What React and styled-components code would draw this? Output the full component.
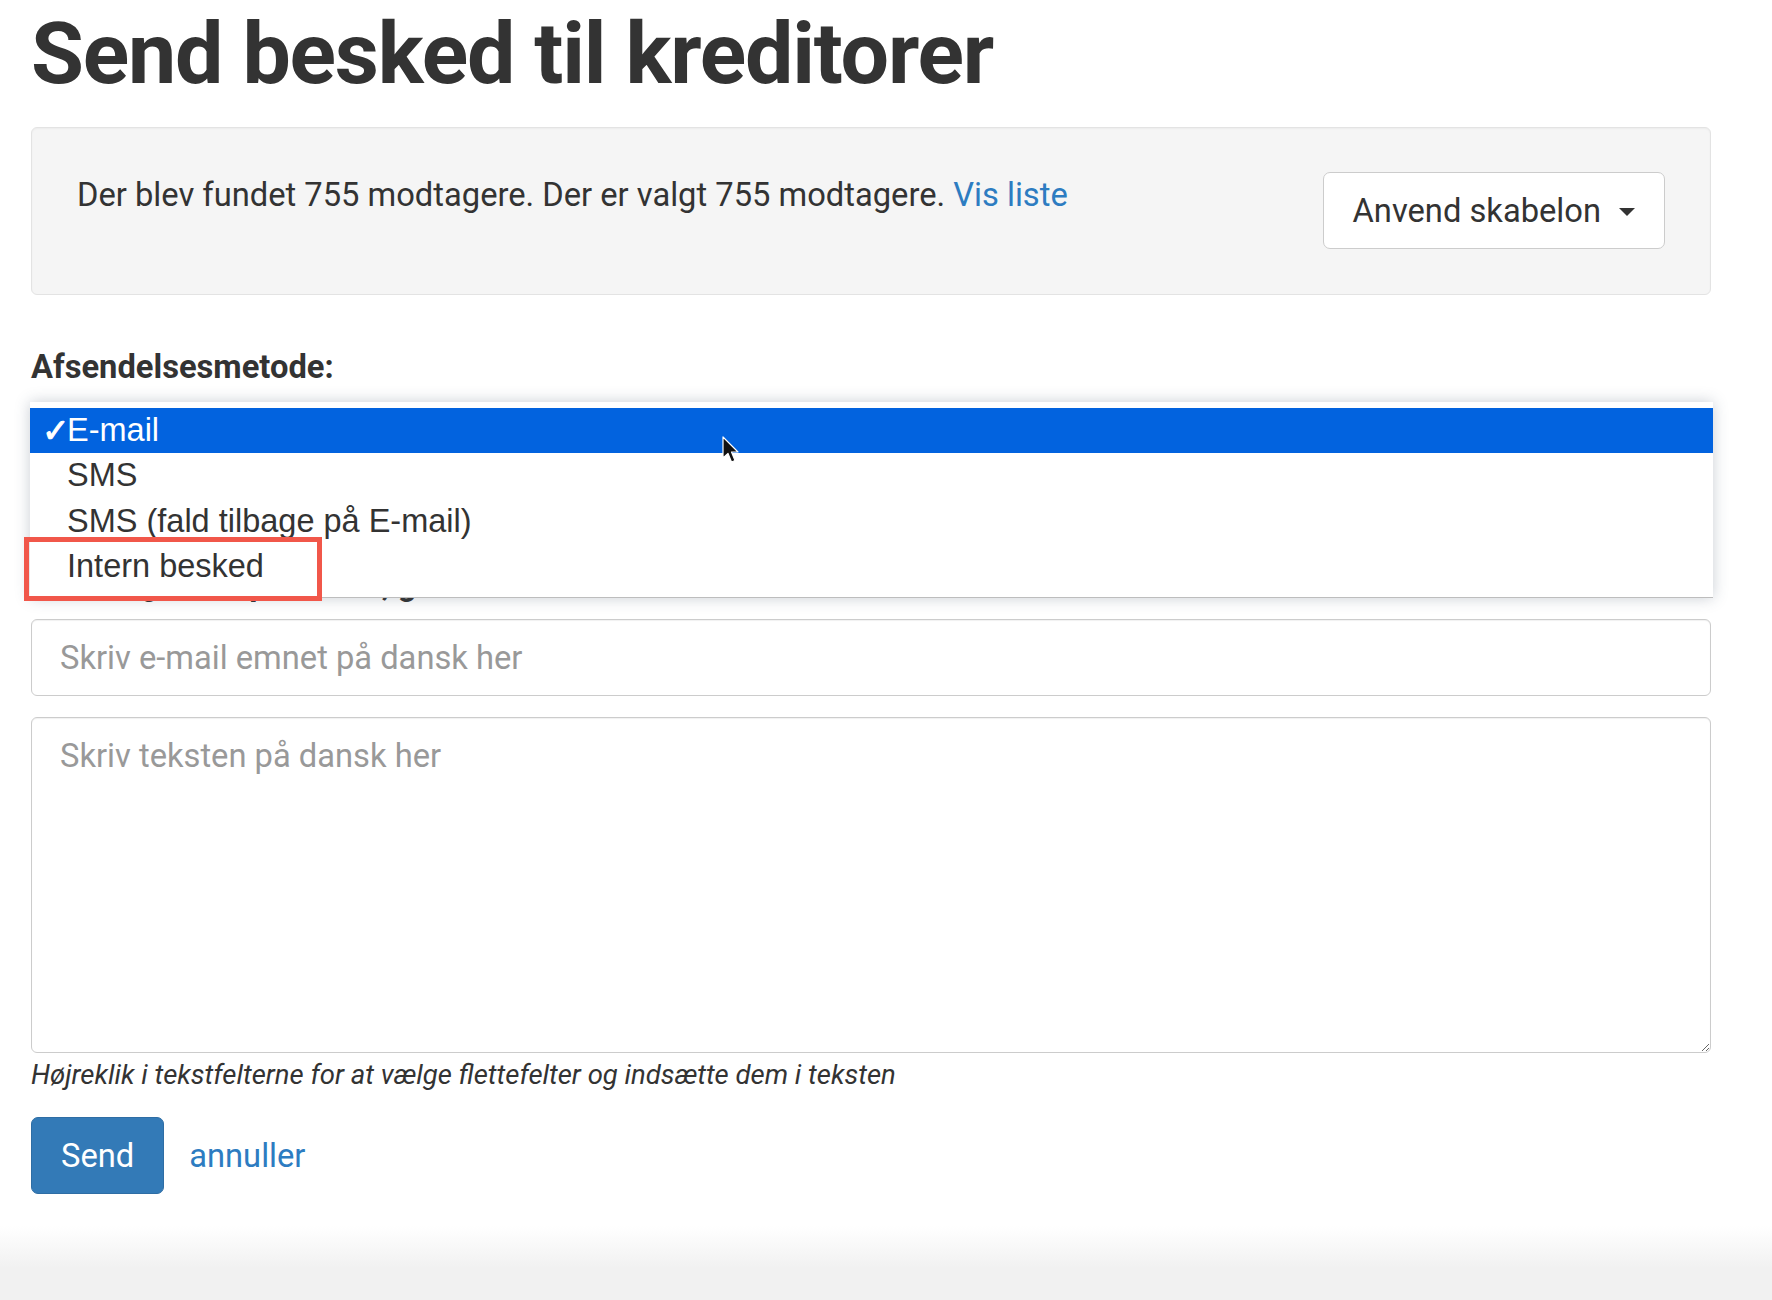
import React from 'react';
import styled, { createGlobalStyle } from 'styled-components';

const GlobalStyle = createGlobalStyle`
    * {
        box-sizing: border-box;
    }

    body {
        margin: 0;
        font-family: Roboto, "Liberation Sans", sans-serif;
        color: #333;
        background: #fff;
    }
`;

const methods = ['E-mail', 'SMS', 'SMS (fald tilbage på E-mail)', 'Intern besked'];

export default function App() {
    return (
        <Page>
            <GlobalStyle />
            <Content>
                <Title>Send besked til kreditorer</Title>

                <Well>
                    <WellText>
                        Der blev fundet 755 modtagere. Der er valgt 755 modtagere.{' '}
                        <TextLink href="#">Vis liste</TextLink>
                    </WellText>
                    <DropdownButton type="button">
                        Anvend skabelon
                        <Caret />
                    </DropdownButton>
                </Well>

                <Form>
                    <Label>Afsendelsesmetode:</Label>
                    <SelectWrap>
                        <SelectBox>E-mail</SelectBox>
                        <OptionList>
                            {methods.map((method, i) => (
                                <Option key={method} $selected={i === 0}>
                                    <CheckSlot>{i === 0 ? '✓' : ''}</CheckSlot>
                                    {method}
                                </Option>
                            ))}
                        </OptionList>
                        <Highlight />
                        <Pointer viewBox="0 0 17 28" width="17" height="28">
                            <path
                                d="M1 1 L1 22 L6 17.5 L9.5 26 L13 24.5 L9.5 16 L16 16 Z"
                                fill="#111"
                                stroke="#fff"
                                strokeWidth="1.2"
                                strokeLinejoin="round"
                            />
                        </Pointer>
                    </SelectWrap>

                    <HiddenLabel>Emne og tekst på dansk, gælder e-mail:</HiddenLabel>
                    <TextInput placeholder="Skriv e-mail emnet på dansk her" />
                    <TextArea placeholder="Skriv teksten på dansk her" />
                    <HelpText>
                        Højreklik i tekstfelterne for at vælge flettefelter og indsætte dem i teksten
                    </HelpText>

                    <Actions>
                        <SendButton type="button">Send</SendButton>
                        <TextLink href="#">annuller</TextLink>
                    </Actions>
                </Form>
            </Content>
        </Page>
    );
}

const Page = styled.div`
    min-height: 1300px;
    background: linear-gradient(to bottom, #fff 1226px, #f1f1f1 1268px, #f1f1f1 100%);
    overflow: hidden;
`;

const Content = styled.div`
    width: 1680px;
    margin-left: 31px;
`;

const Title = styled.h1`
    margin: 11px 0 30px;
    font-size: 86px;
    line-height: 1;
    font-weight: 700;
    color: #333;
    letter-spacing: -1.2px;
`;

const Well = styled.div`
    display: flex;
    justify-content: space-between;
    align-items: flex-start;
    padding: 44px 45px 45px;
    background: #f5f5f5;
    border: 1px solid #e3e3e3;
    border-radius: 6px;
    box-shadow: inset 0 1px 2px rgba(0, 0, 0, 0.04);
`;

const WellText = styled.p`
    margin: 0;
    font-size: 32.7px;
    line-height: 46px;
`;

const TextLink = styled.a`
    color: #2d7cc1;
    text-decoration: none;
    font-size: 32.7px;
    line-height: 46px;
`;

const DropdownButton = styled.button`
    display: flex;
    align-items: center;
    gap: 18px;
    height: 77px;
    padding: 0 29px;
    background: #fff;
    border: 1px solid #ccc;
    border-radius: 7px;
    font-family: Roboto, sans-serif;
    font-size: 32.7px;
    line-height: 46px;
    color: #333;
`;

const Caret = styled.span`
    width: 0;
    height: 0;
    margin-top: 2px;
    border-top: 8px solid #333;
    border-left: 8.5px solid transparent;
    border-right: 8.5px solid transparent;
`;

const Form = styled.form`
    display: flex;
    flex-direction: column;
`;

const Label = styled.label`
    margin-top: 49px;
    font-size: 32.7px;
    line-height: 46px;
    font-weight: 700;
`;

const HiddenLabel = styled(Label)`
    margin-top: 82px;
`;

const SelectWrap = styled.div`
    position: relative;
    margin-top: 12px;
`;

const SelectBox = styled.div`
    height: 77px;
    padding: 0 28px;
    border: 1px solid #ccc;
    border-radius: 6px;
    font-size: 32px;
    line-height: 75px;
`;

const OptionList = styled.ul`
    position: absolute;
    z-index: 5;
    top: 0;
    left: -1px;
    right: -2px;
    margin: 0;
    padding: 6px 0 7px;
    list-style: none;
    background: #fff;
    border-bottom: 1px solid #bdbdbd;
    box-shadow: 0 0 14px rgba(60, 80, 100, 0.28);
    font-family: "Liberation Sans", Arial, sans-serif;
    font-size: 32.5px;
`;

const Option = styled.li`
    display: flex;
    height: 45.4px;
    padding-left: 12px;
    line-height: 45.4px;
    color: ${(p) => (p.$selected ? '#fff' : '#333')};
    background: ${(p) => (p.$selected ? '#0263df' : 'transparent')};
`;

const CheckSlot = styled.span`
    width: 25px;
    font-family: "DejaVu Sans", sans-serif;
    font-size: 33px;
    font-weight: 700;
    -webkit-text-stroke: 1px currentColor;
`;

const Highlight = styled.div`
    position: absolute;
    z-index: 6;
    left: -7px;
    top: 135px;
    width: 298px;
    height: 64px;
    border: 5px solid #f1574a;
`;

const Pointer = styled.svg`
    position: absolute;
    z-index: 7;
    left: 691px;
    top: 34px;
`;

const fieldBase = `
    width: 100%;
    border: 1px solid #ccc;
    border-radius: 6px;
    font-family: Roboto, sans-serif;
    font-size: 32.7px;
    line-height: 46px;
    color: #333;
    background: #fff;
    box-shadow: inset 0 1px 1px rgba(0, 0, 0, 0.06);

    &::placeholder {
        color: #999;
    }
`;

const TextInput = styled.input`
    ${fieldBase}
    margin-top: 12px;
    height: 77px;
    padding: 0 28px;
`;

const TextArea = styled.textarea`
    ${fieldBase}
    display: block;
    margin-top: 21px;
    height: 336px;
    padding: 15px 28px;
    resize: vertical;
`;

const HelpText = styled.p`
    margin: 3px 0 0;
    font-size: 27.5px;
    line-height: 38px;
    font-style: italic;
    color: #333;
`;

const Actions = styled.div`
    display: flex;
    align-items: center;
    gap: 25px;
    margin-top: 23px;
`;

const SendButton = styled.button`
    height: 77px;
    padding: 0 29px;
    background: #337ab7;
    border: 1px solid #2e6da4;
    border-radius: 7px;
    font-family: Roboto, sans-serif;
    font-size: 32.7px;
    line-height: 46px;
    color: #fff;
`;
